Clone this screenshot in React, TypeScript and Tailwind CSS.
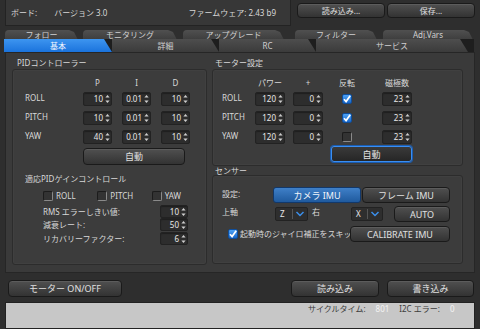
import React from "react";

function Arrows() {
  return (
    <svg width="5" height="10" viewBox="0 0 5 10" className="shrink-0">
      <path d="M2.5 1 L4.6 3.6 L0.4 3.6 Z" fill="#cfcfcf" />
      <path d="M2.5 9 L4.6 6.4 L0.4 6.4 Z" fill="#cfcfcf" />
    </svg>
  );
}

function Spin({ v, className }: { v: string; className: string }) {
  return (
    <div
      className={`flex items-center rounded-[2px] border border-[#222222] bg-[#2d2d2d] shadow-[inset_0_1px_1px_#1f1f1f] ${className}`}
    >
      <span className="flex-1 pr-[2px] text-right leading-none text-[#e8e8e8]">{v}</span>
      <div className="mr-[1px] flex items-center">
        <Arrows />
      </div>
    </div>
  );
}

function Check({ checked }: { checked?: boolean }) {
  if (checked) {
    return (
      <div className="flex h-[10px] w-[10px] shrink-0 items-center justify-center rounded-[2px] border border-[#0f4e9c] bg-gradient-to-b from-[#4ea3f6] to-[#1766c8]">
        <svg width="8" height="8" viewBox="0 0 8 8">
          <path d="M1 4.2 L3.1 6.6 L7.2 0.8" stroke="#ffffff" strokeWidth="1.7" fill="none" />
        </svg>
      </div>
    );
  }
  return (
    <div className="h-[10px] w-[10px] shrink-0 rounded-[2px] border border-b-[#8a8a8a] border-l-[#1c1c1c] border-r-[#8a8a8a] border-t-[#1c1c1c] bg-[#333333]" />
  );
}

function Btn({ children, className }: { children: React.ReactNode; className: string }) {
  return (
    <div
      className={`flex items-center justify-center rounded-[4px] border border-[#1a1a1a] bg-gradient-to-b from-[#505050] to-[#333333] leading-none text-[#e0e0e0] shadow-[inset_0_1px_0_#5c5c5c] ${className}`}
    >
      {children}
    </div>
  );
}

function Combo({ v, className }: { v: string; className: string }) {
  return (
    <div
      className={`flex h-[14px] items-center rounded-[2px] border border-[#222222] bg-[#2e2e2e] ${className}`}
    >
      <span className="w-[12px] pl-[4px] leading-none text-[#e8e8e8]">{v}</span>
      <div className="ml-auto h-[10px] w-px bg-[#555555]" />
      <svg width="14" height="10" viewBox="0 0 14 10">
        <path d="M3.5 3 L7 6.5 L10.5 3" stroke="#3b8fea" strokeWidth="1.5" fill="none" />
      </svg>
    </div>
  );
}

function BackTab({ children, className }: { children: React.ReactNode; className: string }) {
  return (
    <div
      className={`flex h-[10px] justify-center rounded-tl-[4px] bg-gradient-to-b from-[#505050] to-[#3d3d3d] pt-[1px] leading-none text-[#d0d0d0] [clip-path:polygon(0_0,calc(100%_-_9px)_0,calc(100%_-_4px)_2px,100%_100%,0_100%)] ${className}`}
    >
      {children}
    </div>
  );
}

function FrontTab({
  children,
  className,
  active,
}: {
  children: React.ReactNode;
  className: string;
  active?: boolean;
}) {
  return (
    <div
      className={`flex h-[13px] items-center justify-center leading-none [clip-path:polygon(0_0,calc(100%_-_8px)_0,100%_100%,0_100%)] ${
        active
          ? "bg-gradient-to-b from-[#3d95f0] to-[#1a73dc] text-[#f4f8ff]"
          : "bg-gradient-to-b from-[#4e4e4e] to-[#3b3b3b] text-[#d0d0d0]"
      } ${className}`}
    >
      {children}
    </div>
  );
}

export default function App() {
  return (
    <div className="flex h-[329px] w-[480px] flex-col overflow-hidden bg-[#2e2e2e] font-['Noto_Sans','Noto_Sans_CJK_JP',sans-serif] text-[8px] text-[#d8d8d8]">
      {/* Header */}
      <div className="flex h-[28px] shrink-0">
        <div className="ml-[5px] flex h-[26px] w-[286px] items-center border-b border-l border-r border-[#232323] bg-[#373737]">
          <span className="ml-[5px]">ボード:</span>
          <span className="ml-[17px]">バージョン 3.0</span>
          <span className="ml-auto mr-[14px]">ファームウェア: 2.43 b9</span>
        </div>
        <div className="ml-[6px] mt-[3px] flex gap-[2px]">
          <Btn className="h-[15px] w-[88px]">読み込み...</Btn>
          <Btn className="h-[15px] w-[88px]">保存...</Btn>
        </div>
      </div>

      {/* Tabs */}
      <div className="flex h-[24px] shrink-0 flex-col">
        <div className="mt-[2px] flex h-[10px]">
          <BackTab className="ml-[5px] w-[73px]">フォロー</BackTab>
          <BackTab className="ml-[5px] w-[94px]">モニタリング</BackTab>
          <BackTab className="ml-[6px] w-[101px]">アップグレード</BackTab>
          <BackTab className="ml-[11px] w-[82px]">フィルター</BackTab>
          <BackTab className="ml-[6px] w-[90px]">Adj.Vars</BackTab>
        </div>
        <div className="relative -mt-[1px] ml-[4px] flex h-[13px] w-[470px] bg-[#1e1e1e]">
          <FrontTab active className="w-[108px]">
            基本
          </FrontTab>
          <FrontTab className="w-[107px]">詳細</FrontTab>
          <FrontTab className="w-[97px]">RC</FrontTab>
          <FrontTab className="w-[152px]">サービス</FrontTab>
        </div>
      </div>

      {/* Main panel */}
      <div className="ml-[5px] flex h-[221px] w-[470px] shrink-0 border border-[#262626] bg-[#3a3a3a] pl-[6px] pt-[5px]">
        {/* Left group */}
        <div className="flex w-[195px] flex-col">
          <div className="h-[10px] pl-[5px] leading-[10px]">PIDコントローラー</div>
          <div className="mt-[1px] flex h-[196px] flex-col rounded-[3px] border border-[#2c2c2c] bg-[#3c3c3c] pl-[12px] shadow-[inset_0_0_0_1px_#404040]">
            <div className="mt-[8px] flex h-[10px] items-center leading-none">
              <div className="w-[58px]" />
              <div className="w-[29px] text-center">P</div>
              <div className="ml-[10px] w-[29px] text-center">I</div>
              <div className="ml-[10px] w-[29px] text-center">D</div>
            </div>
            {[
              ["ROLL", "10", "0.01", "10", "mt-[4px]"],
              ["PITCH", "10", "0.01", "10", "mt-[5px]"],
              ["YAW", "40", "0.01", "10", "mt-[5px]"],
            ].map((r) => (
              <div key={r[0]} className={`flex h-[14px] items-center ${r[4]}`}>
                <div className="w-[58px] -translate-y-[1px] leading-none">{r[0]}</div>
                <Spin v={r[1]} className="h-[14px] w-[29px]" />
                <Spin v={r[2]} className="ml-[10px] h-[14px] w-[29px]" />
                <Spin v={r[3]} className="ml-[10px] h-[14px] w-[29px]" />
              </div>
            ))}
            <div className="mt-[4px] flex">
              <Btn className="ml-[58px] h-[17px] w-[102px] text-[9px]">自動</Btn>
            </div>
            <div className="mt-[9px] h-[10px] leading-[10px]">適応PIDゲインコントロール</div>
            <div className="mt-[7px] flex h-[10px] items-center pl-[18px]">
              {["ROLL", "PITCH", "YAW"].map((t) => (
                <div key={t} className="flex w-[57px] items-center">
                  <Check />
                  <span className="ml-[3px] leading-none">{t}</span>
                </div>
              ))}
            </div>
            {[
              ["RMS エラーしきい値:", "10", "mt-[4px]"],
              ["減衰レート:", "50", "mt-[0px]"],
              ["リカバリーファクター:", "6", "mt-[1px]"],
            ].map((r) => (
              <div key={r[0]} className={`flex h-[13px] items-center pl-[18px] ${r[2]}`}>
                <div className="w-[117px] leading-none">{r[0]}</div>
                <Spin v={r[1]} className="h-[13px] w-[28px]" />
              </div>
            ))}
          </div>
        </div>

        {/* Right column */}
        <div className="ml-[5px] flex w-[251px] flex-col">
          <div className="h-[10px] pl-[3px] leading-[10px]">モーター設定</div>
          <div className="mt-[1px] flex h-[97px] flex-col rounded-[3px] border border-[#2c2c2c] bg-[#3c3c3c] pl-[9px] shadow-[inset_0_0_0_1px_#404040]">
            <div className="mt-[8px] flex h-[10px] items-center leading-none">
              <div className="w-[33px]" />
              <div className="w-[30px] text-center">パワー</div>
              <div className="ml-[8px] w-[30px] text-center">+</div>
              <div className="ml-[9px] w-[30px] text-center">反転</div>
              <div className="ml-[20px] w-[30px] text-center">磁極数</div>
            </div>
            {[
              ["ROLL", true, "mt-[4px]"],
              ["PITCH", true, "mt-[5px]"],
              ["YAW", false, "mt-[5px]"],
            ].map((r) => (
              <div key={r[0] as string} className={`flex h-[14px] items-center ${r[2]}`}>
                <div className="w-[33px] -translate-y-[1px] leading-none">{r[0] as string}</div>
                <Spin v="120" className="h-[14px] w-[30px]" />
                <Spin v="0" className="ml-[8px] h-[14px] w-[30px]" />
                <div className="ml-[9px] flex w-[30px] justify-center">
                  <Check checked={r[1] as boolean} />
                </div>
                <Spin v="23" className="ml-[20px] h-[14px] w-[30px]" />
              </div>
            ))}
            <div className="mt-[2px] flex">
              <div className="ml-[109px] flex h-[16px] w-[81px] items-center justify-center rounded-[3px] border border-[#3a8ef2] bg-gradient-to-b from-[#3a3a3a] to-[#262626] text-[9px] leading-none text-[#e4e4e4] shadow-[0_0_0_1px_#1a5cb0]">
                自動
              </div>
            </div>
          </div>

          <div className="h-[9px] pl-[3px] leading-[9px]">センサー</div>
          <div className="flex h-[89px] flex-col rounded-[3px] border border-[#2c2c2c] bg-[#3c3c3c] pl-[9px] shadow-[inset_0_0_0_1px_#404040]">
            <div className="mt-[11px] flex h-[16px] items-center">
              <div className="w-[51px] -translate-y-[1px] leading-none">設定:</div>
              <div className="flex h-[16px] w-[88px] items-center justify-center rounded-[3px] border border-[#12386a] bg-gradient-to-b from-[#3f80c8] to-[#1f5a9e] text-[9px] leading-none text-[#f0f4fa]">
                カメラ IMU
              </div>
              <Btn className="ml-[1px] h-[16px] w-[88px] text-[9px]">フレーム IMU</Btn>
            </div>
            <div className="mt-[3px] flex h-[16px] items-center">
              <div className="w-[53px] -translate-y-[2px] leading-none">上軸</div>
              <Combo v="Z" className="w-[33px]" />
              <div className="ml-[4px] w-[39px] -translate-y-[2px] leading-none">右</div>
              <Combo v="X" className="w-[32px]" />
              <Btn className="ml-[11px] h-[16px] w-[56px] text-[9px]">AUTO</Btn>
            </div>
            <div className="mt-[4px] flex h-[16px] items-center pl-[6px]">
              <Check checked />
              <div className="ml-[2px] w-[110px] overflow-hidden whitespace-nowrap leading-none">
                起動時のジャイロ補正をスキップ
              </div>
              <Btn className="h-[16px] w-[100px] text-[9px]">CALIBRATE IMU</Btn>
            </div>
          </div>
        </div>
      </div>

      {/* Bottom buttons */}
      <div className="mt-[7px] flex h-[17px] shrink-0">
        <Btn className="ml-[8px] h-[17px] w-[114px] text-[9px]">モーター ON/OFF</Btn>
        <Btn className="ml-auto h-[17px] w-[88px] text-[9px]">読み込み</Btn>
        <Btn className="ml-[8px] mr-[6px] h-[17px] w-[87px] text-[9px]">書き込み</Btn>
      </div>

      {/* Status area */}
      <div className="ml-[5px] mt-[5px] w-[470px] flex-1 border border-[#222222] bg-[#c7c7c7]">
        <div className="mt-[1px] flex h-[9px] items-center leading-none">
          <span className="ml-[302px] text-[#3c3c3c]">サイクルタイム:</span>
          <span className="ml-[10px] text-[#f4f4f4]">801</span>
          <span className="ml-[10px] text-[#3c3c3c]">I2C エラー:</span>
          <span className="ml-[10px] text-[#f4f4f4]">0</span>
        </div>
      </div>
    </div>
  );
}
